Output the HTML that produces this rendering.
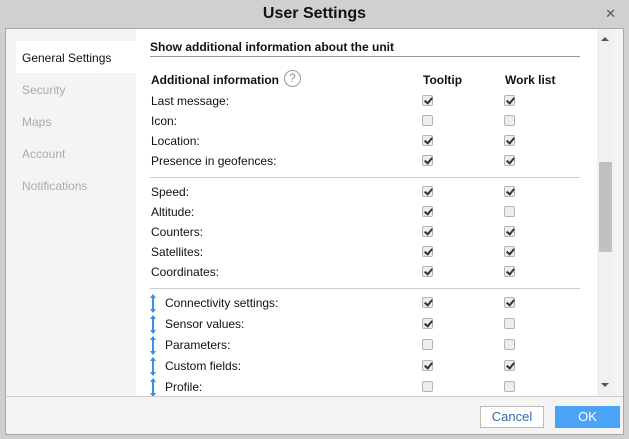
<!DOCTYPE html>
<html><head><style>
*{margin:0;padding:0;box-sizing:border-box}
body{width:629px;height:439px;background:#d0d0d0;font-family:"Liberation Sans",sans-serif;position:relative;overflow:hidden;font-size:12px;color:#111}
.title{position:absolute;left:0;top:0;width:629px;height:28px;text-align:center;font-weight:bold;font-size:16px;line-height:28px;color:#111}
.x{position:absolute;right:13px;top:6px;font-size:13px;color:#555}
.box{position:absolute;left:5px;top:28px;width:619px;height:407px;background:#f4f4f4;border:1px solid #a8a8a8;border-top:1px solid #a8a8a8}
.nav{position:absolute;left:0;top:0;width:130px;height:367px;background:#f4f4f4}
.nav div{position:absolute;left:16px;font-size:12px;color:#aaa}
.nav .act{left:10px;top:12px;width:120px;height:32px;background:#fff;color:#111;padding:10px 0 0 6px}
.main{position:absolute;left:130px;top:0;width:461px;height:367px;background:#fff;overflow:hidden}
.sb{position:absolute;left:591px;top:0;width:17px;height:367px;background:#f1f1f1}
.thumb{position:absolute;left:2px;top:133px;width:13px;height:90px;background:#c1c1c1}
.foot{position:absolute;left:0;top:367px;width:617px;height:38px;border-top:1px solid #ccc;background:#f4f4f4}
.t{position:absolute;white-space:nowrap}
.cb{position:absolute;width:11px;height:11px;border:1px solid #b4b4b4;border-radius:2px;background:#ededed}
.cb.c::after{content:"";position:absolute;left:3px;top:0px;width:3px;height:6px;border:solid #333;border-width:0 2px 2px 0;transform:rotate(40deg)}
.hr{position:absolute;left:14px;width:430px;height:1px;background:#aaa}
.arr{position:absolute;left:16px;width:2px;height:17px;background:#3a8ee6}
.arr::before,.arr::after{content:"";position:absolute;left:-2px;border-left:3px solid transparent;border-right:3px solid transparent}
.arr::before{top:-1px;border-bottom:4px solid #3a8ee6}
.arr::after{bottom:-1px;border-top:4px solid #3a8ee6}
.btn{position:absolute;top:9px;height:22px;font-size:13px;text-align:center;line-height:20px}
</style></head><body>
<div class="title">User Settings</div>
<div class="x">✕</div>
<div class="box">
<div class="nav">
<div class="act">General Settings</div>
<div style="top:54px">Security</div>
<div style="top:86px">Maps</div>
<div style="top:118px">Account</div>
<div style="top:150px">Notifications</div>
</div>
<div class="main">
<div class="t" style="left:14px;top:11px;font-weight:bold">Show additional information about the unit</div>
<div class="hr" style="top:27px;background:#999"></div>
<div class="t" style="left:15px;top:44px;font-weight:bold">Additional information</div>
<div class="t" style="left:148px;top:41px;width:17px;height:17px;border:1px solid #999;border-radius:50%;text-align:center;line-height:15px;color:#999;font-size:12px">?</div>
<div class="t" style="left:287px;top:44px;font-weight:bold">Tooltip</div>
<div class="t" style="left:369px;top:44px;font-weight:bold">Work list</div>
<div class="t" style="left:15px;top:65px">Last message:</div>
<div class="t" style="left:15px;top:85px">Icon:</div>
<div class="t" style="left:15px;top:105px">Location:</div>
<div class="t" style="left:15px;top:125px">Presence in geofences:</div>
<div class="hr" style="top:148px;background:#ccc"></div>
<div class="t" style="left:15px;top:156px">Speed:</div>
<div class="t" style="left:15px;top:176px">Altitude:</div>
<div class="t" style="left:15px;top:196px">Counters:</div>
<div class="t" style="left:15px;top:216px">Satellites:</div>
<div class="t" style="left:15px;top:236px">Coordinates:</div>
<div class="hr" style="top:259px;background:#ccc"></div>
<div class="t" style="left:29px;top:267px">Connectivity settings:</div>
<div class="t" style="left:29px;top:288px">Sensor values:</div>
<div class="t" style="left:29px;top:309px">Parameters:</div>
<div class="t" style="left:29px;top:330px">Custom fields:</div>
<div class="t" style="left:29px;top:351px">Profile:</div>
<div class="arr" style="top:266px"></div>
<div class="arr" style="top:287px"></div>
<div class="arr" style="top:308px"></div>
<div class="arr" style="top:329px"></div>
<div class="arr" style="top:350px"></div>
<!-- checkboxes -->
<div class="cb c" style="left:286px;top:66px"></div><div class="cb c" style="left:368px;top:66px"></div>
<div class="cb" style="left:286px;top:86px"></div><div class="cb" style="left:368px;top:86px"></div>
<div class="cb c" style="left:286px;top:106px"></div><div class="cb c" style="left:368px;top:106px"></div>
<div class="cb c" style="left:286px;top:126px"></div><div class="cb c" style="left:368px;top:126px"></div>
<div class="cb c" style="left:286px;top:157px"></div><div class="cb c" style="left:368px;top:157px"></div>
<div class="cb c" style="left:286px;top:177px"></div><div class="cb" style="left:368px;top:177px"></div>
<div class="cb c" style="left:286px;top:197px"></div><div class="cb c" style="left:368px;top:197px"></div>
<div class="cb c" style="left:286px;top:217px"></div><div class="cb c" style="left:368px;top:217px"></div>
<div class="cb c" style="left:286px;top:237px"></div><div class="cb c" style="left:368px;top:237px"></div>
<div class="cb c" style="left:286px;top:268px"></div><div class="cb c" style="left:368px;top:268px"></div>
<div class="cb c" style="left:286px;top:289px"></div><div class="cb" style="left:368px;top:289px"></div>
<div class="cb" style="left:286px;top:310px"></div><div class="cb" style="left:368px;top:310px"></div>
<div class="cb c" style="left:286px;top:331px"></div><div class="cb c" style="left:368px;top:331px"></div>
<div class="cb" style="left:286px;top:352px"></div><div class="cb" style="left:368px;top:352px"></div>
</div>
<div class="sb"><div class="thumb"></div>
<div style="position:absolute;left:4px;top:8px;border-left:4px solid transparent;border-right:4px solid transparent;border-bottom:4px solid #555"></div>
<div style="position:absolute;left:4px;top:354px;border-left:4px solid transparent;border-right:4px solid transparent;border-top:4px solid #555"></div>
</div>
<div class="foot">
<div class="btn" style="left:474px;width:64px;background:#fff;border:1px solid #bbb;color:#2a6fb5">Cancel</div>
<div class="btn" style="left:549px;width:65px;background:#4aa3f5;color:#fff;line-height:22px">OK</div>
</div>
</div>
</body></html>
